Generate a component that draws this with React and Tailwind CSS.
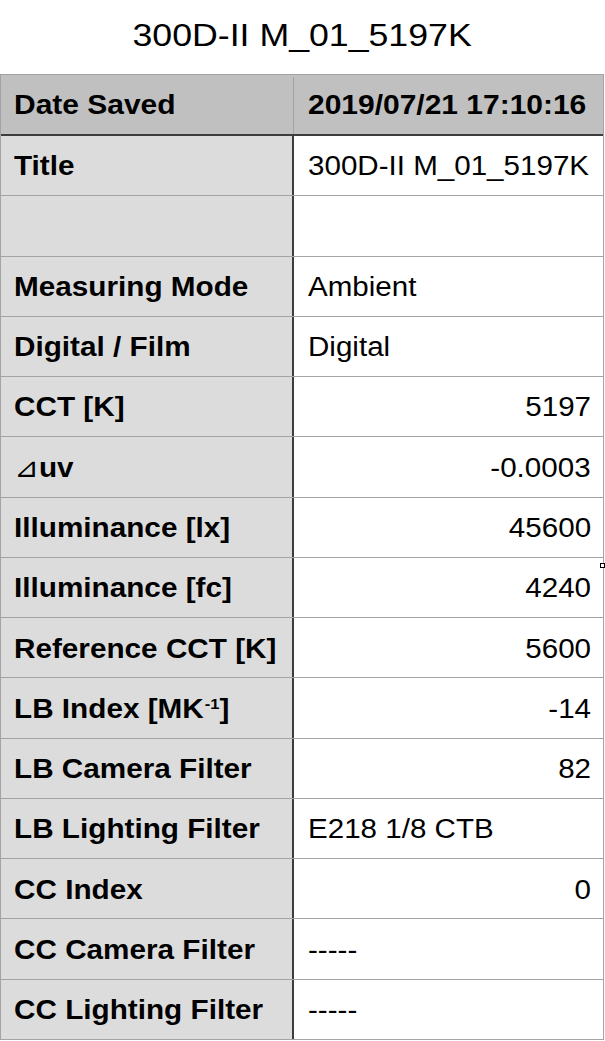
export default function App() {
  const rows = [
    { k: "Title", v: "300D-II M_01_5197K", a: "left" },
    { k: "", v: "", a: "left" },
    { k: "Measuring Mode", v: "Ambient", a: "left" },
    { k: "Digital / Film", v: "Digital", a: "left" },
    { k: "CCT [K]", v: "5197", a: "right" },
    { k: "uv", v: "-0.0003", a: "right", tri: true },
    { k: "Illuminance [lx]", v: "45600", a: "right" },
    { k: "Illuminance [fc]", v: "4240", a: "right", handle: true },
    { k: "Reference CCT [K]", v: "5600", a: "right" },
    { k: "LB Index [MK", v: "-14", a: "right", sup: true },
    { k: "LB Camera Filter", v: "82", a: "right" },
    { k: "LB Lighting Filter", v: "E218 1/8 CTB", a: "left" },
    { k: "CC Index", v: "0", a: "right" },
    { k: "CC Camera Filter", v: "-----", a: "left" },
    { k: "CC Lighting Filter", v: "-----", a: "left" },
  ];
  return (
    <div
      className="w-[605px] h-[1041px] bg-white overflow-hidden text-black"
      style={{ fontFamily: '"Liberation Sans", Arial, sans-serif' }}
    >
      <div className="h-[74px] flex items-center justify-center text-[32px] pb-[5px]">
        <span className="inline-block whitespace-nowrap scale-x-[1.115]">300D-II M_01_5197K</span>
      </div>
      <div className="w-[604px] border-l border-r border-t border-[#a3a3a3]">
        <div className="flex h-[61px] bg-[#bfc0bf] border-b-2 border-[#3d3d3d] text-[27px] font-bold pt-[2px]">
          <div className="w-[293px] border-r border-[#a3a3a3] flex items-center pl-[13px]">
            <span className="inline-block whitespace-nowrap origin-left scale-x-[1.11]">Date Saved</span>
          </div>
          <div className="flex-1 flex items-center pl-[14px]">
            <span className="inline-block whitespace-nowrap origin-left scale-x-[1.11]">2019/07/21 17:10:16</span>
          </div>
        </div>
        {rows.map((r, i) => (
          <div key={i} className="flex h-[60.27px] border-b border-[#a3a3a3] text-[27px]">
            <div className="w-[293px] bg-[#dcdcdc] border-r-2 border-[#3d3d3d] flex items-center pl-[13px] pt-[2px] font-bold">
              <span className="inline-block whitespace-nowrap origin-left scale-x-[1.1]">
                {r.tri && (
                  <span
                    className="font-normal text-[27px] leading-none"
                    style={{ fontFamily: '"DejaVu Sans", sans-serif' }}
                  >
                    ⊿
                  </span>
                )}
                {r.k}
                {r.sup && (
                  <>
                    <span className="relative top-[-9px] text-[15px] ml-[1px]">-1</span>]
                  </>
                )}
              </span>
            </div>
            <div
              className={`relative flex-1 flex items-center pt-[2px] ${
                r.a === "right" ? "justify-end pr-[12px]" : "pl-[14px]"
              }`}
            >
              <span
                className={`inline-block whitespace-nowrap scale-x-[1.095] ${
                  r.a === "right" ? "origin-right" : "origin-left"
                }`}
              >
                {r.v}
              </span>
              {r.handle && (
                <div className="absolute right-[-2px] top-[5px] w-[5px] h-[5px] border border-black bg-white" />
              )}
            </div>
          </div>
        ))}
      </div>
    </div>
  );
}
